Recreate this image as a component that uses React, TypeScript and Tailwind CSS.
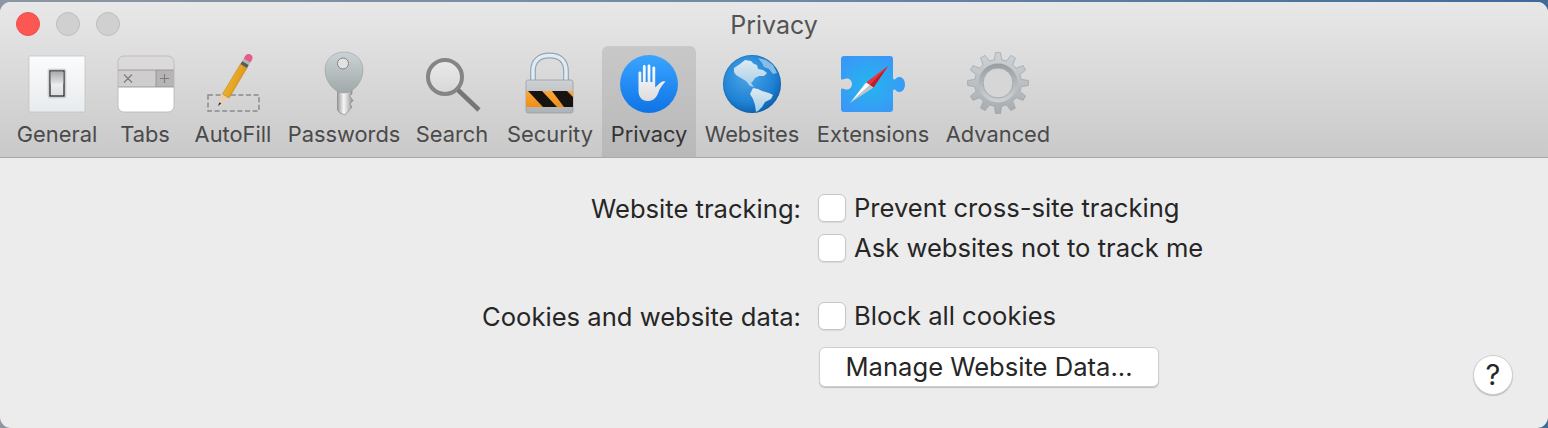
import React from "react";

function gearPath(cx: number, cy: number, ro: number, ri: number, n: number) {
  const pts: string[] = [];
  const step = (Math.PI * 2) / n;
  for (let i = 0; i < n; i++) {
    const a = -Math.PI / 2 + i * step;
    const seq: [number, number][] = [
      [ri, a - step * 0.3],
      [ro, a - step * 0.16],
      [ro, a + step * 0.16],
      [ri, a + step * 0.3],
    ];
    seq.forEach(([r, t]) => pts.push(`${(cx + r * Math.cos(t)).toFixed(2)} ${(cy + r * Math.sin(t)).toFixed(2)}`));
  }
  return "M" + pts.join("L") + "Z";
}

const box = "block w-[64px] h-[68px] overflow-visible";

function General() {
  return (
    <svg viewBox="0 0 64 68" className={box}>
      <defs>
        <linearGradient id="gen" x1="0" y1="0" x2="0" y2="1"><stop offset="0" stopColor="#fbfcfd" /><stop offset="1" stopColor="#e8ebee" /></linearGradient>
        <linearGradient id="gent" x1="0" y1="0" x2="0" y2="1"><stop offset="0" stopColor="#a9abac" /><stop offset="1" stopColor="#e3e4e5" /></linearGradient>
        <linearGradient id="genb" x1="0" y1="0" x2="0" y2="1"><stop offset="0" stopColor="#ffffff" /><stop offset="1" stopColor="#dcdedf" /></linearGradient>
      </defs>
      <rect x="4" y="6" width="56" height="56" rx="1" fill="url(#gen)" stroke="#bfbfbf" strokeWidth="0.7" />
      <rect x="23" y="19" width="18" height="29" rx="1.5" fill="#d2d4d6" stroke="#c4c6c8" strokeWidth="0.5" />
      <rect x="25" y="21" width="14" height="25" fill="url(#genb)" stroke="#2e2e2e" strokeWidth="1.3" />
      <rect x="25.7" y="21.7" width="12.6" height="12" fill="url(#gent)" />
    </svg>
  );
}

function Tabs() {
  return (
    <svg viewBox="0 0 64 68" className={box}>
      <defs><clipPath id="tabclip"><rect x="5" y="6" width="56" height="56" rx="6" /></clipPath></defs>
      <g clipPath="url(#tabclip)">
        <rect x="5" y="6" width="56" height="14" fill="#dcd9d9" />
        <rect x="5" y="20" width="56" height="17" fill="#cfcdcd" />
        <rect x="43" y="20" width="18" height="17" fill="#b6b4b4" />
        <rect x="5" y="37" width="56" height="25" fill="#ffffff" />
        <path d="M5 20H61M43 20V37M5 37H61" stroke="#8d8d8d" strokeWidth="0.8" fill="none" />
      </g>
      <rect x="5" y="6" width="56" height="56" rx="6" fill="none" stroke="#b5b5b5" strokeWidth="0.8" />
      <path d="M11 24.5L19 32.5M19 24.5L11 32.5M47 28.5H56M51.5 24V33" stroke="#7b7b7b" strokeWidth="1.1" fill="none" />
    </svg>
  );
}

function AutoFill() {
  return (
    <svg viewBox="0 0 64 68" className={box}>
      <defs><linearGradient id="pen" x1="0" y1="0" x2="1" y2="0.6"><stop offset="0" stopColor="#f8c63c" /><stop offset="1" stopColor="#d98f12" /></linearGradient></defs>
      <rect x="7" y="45" width="51" height="16" fill="none" stroke="#8a8a8a" strokeWidth="1.5" strokeDasharray="5 2.6" />
      <path d="M17 56L21.5 44L28 48Z" fill="#eccfa6" />
      <path d="M17 56L18.4 52.3L20.4 53.5Z" fill="#333" />
      <path d="M21.5 44L39.5 14L46 18L28 48Z" fill="url(#pen)" stroke="#b57a10" strokeWidth="0.5" />
      <path d="M39.5 14L41.3 11L47.8 15L46 18Z" fill="#5d5a55" />
      <path d="M41.3 11L42.8 8.5L49.2 12.5L47.8 15Z" fill="#a9b7bf" />
      <path d="M42.8 8.5C44 5.5 46.5 3 49.5 4.5C52.5 6 52 9.5 49.2 12.5Z" fill="#e75b86" />
    </svg>
  );
}

function Key() {
  return (
    <svg viewBox="0 0 64 68" className={box}>
      <defs>
        <linearGradient id="keyh" x1="0" y1="0" x2="0" y2="1"><stop offset="0" stopColor="#ccd3d5" /><stop offset="1" stopColor="#a0a8aa" /></linearGradient>
        <linearGradient id="keys" x1="0" y1="0" x2="1" y2="0"><stop offset="0" stopColor="#9c9c9c" /><stop offset="0.4" stopColor="#f6f6f6" /><stop offset="0.6" stopColor="#d8d8d8" /><stop offset="1" stopColor="#8e8e8e" /></linearGradient>
      </defs>
      <path d="M25.5 36H40V44L37.5 46L41 50.5L38 54L40 57L33 65L28 63L25.5 60Z" fill="url(#keys)" stroke="#7c7c7c" strokeWidth="0.6" />
      <path d="M32 2C42.5 2 51 9 51 20C51 31 42 43 32 43C22 43 13 31 13 20C13 9 21.5 2 32 2Z" fill="url(#keyh)" stroke="#98a0a2" strokeWidth="0.6" />
      <circle cx="31" cy="13.5" r="5.5" fill="#e2e2e2" stroke="#7f8688" strokeWidth="1" />
    </svg>
  );
}

function Search() {
  return (
    <svg viewBox="0 0 64 68" className={box}>
      <defs><linearGradient id="sr" x1="0" y1="0" x2="0" y2="1"><stop offset="0" stopColor="#e9e9e9" /><stop offset="1" stopColor="#d8d8d8" /></linearGradient></defs>
      <circle cx="25" cy="27" r="17" fill="url(#sr)" stroke="#858585" strokeWidth="4" />
      <path d="M38 40L59 60" stroke="#767676" strokeWidth="4.6" />
    </svg>
  );
}

function Lock() {
  return (
    <svg viewBox="0 0 64 68" className={box}>
      <defs>
        <linearGradient id="lk" x1="0" y1="0" x2="0" y2="1"><stop offset="0" stopColor="#cdd1d4" /><stop offset="1" stopColor="#aeb3b8" /></linearGradient>
        <linearGradient id="or" x1="0" y1="0" x2="0" y2="1"><stop offset="0" stopColor="#f6a93a" /><stop offset="1" stopColor="#f08d19" /></linearGradient>
        <clipPath id="band"><rect x="8" y="41" width="47" height="16" /></clipPath>
      </defs>
      <path d="M15 31V21C15 10 22 5.5 31.5 5.5C41 5.5 48 10 48 21V31" fill="none" stroke="#8ea8bb" strokeWidth="5.8" />
      <path d="M15 31V21C15 10 22 5.5 31.5 5.5C41 5.5 48 10 48 21V31" fill="none" stroke="#e4ebf0" strokeWidth="3.4" />
      <rect x="8" y="30" width="47" height="33" rx="2" fill="url(#lk)" stroke="#93989d" strokeWidth="0.7" />
      <g clipPath="url(#band)">
        <rect x="8" y="41" width="47" height="16" fill="url(#or)" />
        <path d="M10 41H24L39 57H25Z M34 41H49L55 47V57H46Z" fill="#161310" />
      </g>
    </svg>
  );
}

function Hand() {
  return (
    <svg viewBox="0 0 64 68" className={box}>
      <defs>
        <linearGradient id="pv" x1="0" y1="0" x2="0" y2="1"><stop offset="0" stopColor="#3aa5ff" /><stop offset="1" stopColor="#0f73e6" /></linearGradient>
        <linearGradient id="hd" x1="0" y1="0" x2="0" y2="1"><stop offset="0" stopColor="#ffffff" /><stop offset="1" stopColor="#dcdcdc" /></linearGradient>
      </defs>
      <circle cx="32" cy="34" r="29" fill="url(#pv)" />
      <path d="M21.5 23C21.5 21 24.3 21 24.3 23V32H25.9V16.5C25.9 14.4 28.7 14.4 28.7 16.5V32H30.6V16C30.6 13.9 33.4 13.9 33.4 16V32H35.4V18C35.4 16 38.2 16 38.2 18V37.5L43.5 32.5C45.5 31 48 31 48.5 31.6C45 35 42.5 39 41 43.5C39 48.5 35.5 51 30.5 51C25 51 21.5 47 21.5 41Z" fill="url(#hd)" />
    </svg>
  );
}

function Globe() {
  return (
    <svg viewBox="0 0 64 68" className={box}>
      <defs>
        <radialGradient id="gl" cx="0.42" cy="0.35" r="0.72"><stop offset="0" stopColor="#4ea6e8" /><stop offset="0.65" stopColor="#1f82d4" /><stop offset="1" stopColor="#0b5aa6" /></radialGradient>
        <linearGradient id="ld" x1="0" y1="0" x2="0" y2="1"><stop offset="0" stopColor="#dfe9ef" /><stop offset="1" stopColor="#a6cfea" /></linearGradient>
      </defs>
      <circle cx="32" cy="34" r="29" fill="url(#gl)" />
      <path d="M14 18L20 14L25 10L31 11L34 14L37 15L38 19L43 20L47 23L44 26L39 26L35 28L33 31L31 33L34 37L30 36L26 31L21 28L16 25L14 22Z" fill="url(#ld)" />
      <path d="M38 8L46 10L53 15L57 23L53 24L49 19L44 17L42 13Z" fill="#a8cfe9" opacity="0.75" />
      <path d="M33 38L38 39L42 41L49 43L53 45L51 49L45 52L42 57L38 61L36 62L35 55L33 49L30 44Z" fill="url(#ld)" />
      <circle cx="32" cy="34" r="28.6" fill="none" stroke="#0b4f94" strokeWidth="0.6" opacity="0.5" />
    </svg>
  );
}

function Puzzle() {
  return (
    <svg viewBox="0 0 64 68" className={box}>
      <defs>
        <radialGradient id="pz" cx="0.45" cy="0.5" r="0.6"><stop offset="0" stopColor="#24b6ee" /><stop offset="1" stopColor="#3a97f7" /></radialGradient>
      </defs>
      <path d="M3 6H49C51 6 52 7 52 9V28C52 29.5 54 30 55 28.5C56 27.3 57.5 27 58.5 27C61.5 27 64 30 64 34.5C64 39 61.5 42 58.5 42C57.5 42 56 41.7 55 40.5C54 39 52 39.5 52 41V59C52 61 51 62 49 62H3C1 62 0 61 0 59V39C1.5 37.5 3 39.5 5.5 39.5C8.5 39.5 11 37.5 11 34C11 30.5 8.5 28.5 5.5 28.5C3 28.5 1.5 30.5 0 29V9C0 7 1 6 3 6Z" fill="url(#pz)" />
      <path d="M47 16L32.5 37.5L25 32.5Z" fill="#ee2f3c" />
      <path d="M47 16L32.5 37.5L29 35Z" fill="#b5202c" />
      <path d="M9 53L25 32.5L29 35Z" fill="#fbfbfb" />
      <path d="M9 53L29 35L32.5 37.5Z" fill="#c4c4c4" />
    </svg>
  );
}

function Gear() {
  return (
    <svg viewBox="0 0 64 68" className={box}>
      <defs>
        <linearGradient id="gr" x1="0" y1="0" x2="0" y2="1"><stop offset="0" stopColor="#ced3d7" /><stop offset="1" stopColor="#a6acb0" /></linearGradient>
        <linearGradient id="gri" x1="0" y1="0" x2="0" y2="1"><stop offset="0" stopColor="#989da1" /><stop offset="1" stopColor="#ced2d5" /></linearGradient>
      </defs>
      <path d={gearPath(32, 33, 30.5, 23.5, 12)} fill="url(#gr)" stroke="#969ca0" strokeWidth="0.6" strokeLinejoin="round" />
      <circle cx="32" cy="33" r="19.5" fill="url(#gri)" />
      <circle cx="32" cy="33" r="15" fill="#d6d6d6" stroke="#a6abaf" strokeWidth="1" />
    </svg>
  );
}

const items = [
  { label: "General", w: "w-[98px]", icon: <General /> },
  { label: "Tabs", w: "w-[78px]", icon: <Tabs /> },
  { label: "AutoFill", w: "w-[98px]", icon: <AutoFill /> },
  { label: "Passwords", w: "w-[124px]", icon: <Key /> },
  { label: "Search", w: "w-[92px]", icon: <Search /> },
  { label: "Security", w: "w-[104px]", icon: <Lock /> },
  { label: "Privacy", w: "w-[94px]", icon: <Hand />, active: true },
  { label: "Websites", w: "w-[112px]", icon: <Globe /> },
  { label: "Extensions", w: "w-[130px]", icon: <Puzzle /> },
  { label: "Advanced", w: "w-[120px]", icon: <Gear /> },
];

function Check({ label }: { label: string }) {
  return (
    <label className="flex items-center gap-[8px] h-[40px] text-[25.6px] text-[#262626]">
      <span className="block w-[28px] h-[28px] rounded-[6px] bg-white border border-[#c6c6c6] shadow-[0_1px_1px_rgba(0,0,0,0.08)]" />
      <span className="pt-[1px]">{label}</span>
    </label>
  );
}

export default function App() {
  return (
    <div className="w-[1548px] h-[428px] pt-[2px] overflow-hidden bg-gradient-to-r from-[#8d97a1] via-[#6d8aa8] to-[#3f6b99] font-['Inter','Liberation_Sans',sans-serif]">
      <div className="h-[426px] rounded-[11px] overflow-hidden bg-[#ececec] flex flex-col">
        <header className="h-[155px] shrink-0 bg-gradient-to-b from-[#e8e8e8] to-[#c9c9c9] border-b border-[#a9a9a9] box-content">
          <div className="h-[44px] grid grid-cols-[1fr_auto_1fr] items-center">
            <div className="flex items-center gap-[16px] pl-[16px]">
              <span className="block w-[24px] h-[24px] rounded-full bg-[#fc5753] border border-[#e8514d]" />
              <span className="block w-[24px] h-[24px] rounded-full bg-[#d0d0d0] border border-[#bdbdbd]" />
              <span className="block w-[24px] h-[24px] rounded-full bg-[#d0d0d0] border border-[#bdbdbd]" />
            </div>
            <div className="pt-[2px] text-[25px] leading-[30px] text-[#545454]">Privacy</div>
            <div />
          </div>
          <nav className="flex pl-[8px] h-[111px]">
            {items.map((it) => (
              <div
                key={it.label}
                className={
                  it.active
                    ? `${it.w} flex flex-col items-center pt-[4px] rounded-t-[6px] bg-gradient-to-b from-[#c8c8c8] to-[#b8b8b8]`
                    : `${it.w} flex flex-col items-center pt-[4px]`
                }
              >
                {it.icon}
                <span className={it.active ? "mt-[2px] text-[21.85px] leading-[28px] text-[#333333]" : "mt-[2px] text-[21.85px] leading-[28px] text-[#4a4a4a]"}>
                  {it.label}
                </span>
              </div>
            ))}
          </nav>
        </header>
        <main className="flex-1 flex items-end pt-[30px] pb-[33px] pr-[35px]">
          <div className="self-start grid grid-cols-[801px_auto] gap-x-[17px] text-[25.6px] text-[#262626]">
            <div className="text-right pt-[1px] leading-[39px]">Website tracking:</div>
            <Check label="Prevent cross-site tracking" />
            <div />
            <Check label="Ask websites not to track me" />
            <div className="text-right mt-[28px] pt-[1px] leading-[39px]">Cookies and website data:</div>
            <div className="mt-[28px]"><Check label="Block all cookies" /></div>
            <div />
            <button className="mt-[11px] ml-[1px] w-[340px] h-[40px] rounded-[6px] bg-white border border-[#cfcfcf] shadow-[0_1px_1px_rgba(0,0,0,0.2)] text-[25.6px] text-[#262626]">
              Manage Website Data...
            </button>
          </div>
          <button className="ml-auto w-[40px] h-[40px] rounded-full bg-white border border-[#cfcfcf] shadow-[0_1px_1px_rgba(0,0,0,0.2)] text-[29px] text-[#262626] flex items-center justify-center">
            ?
          </button>
        </main>
      </div>
    </div>
  );
}
